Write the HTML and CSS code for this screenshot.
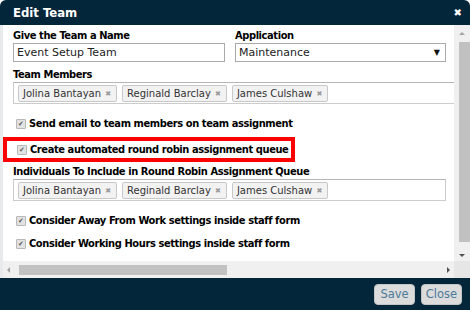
FILE: index.html
```html
<!DOCTYPE html>
<html lang="en">
<head>
  <meta charset="UTF-8" />
  <title>Edit Team</title>
  <link rel="stylesheet" href="styles.css">
</head>
<body>
  <div class="dialog">
    <div class="dlg-head">
      <span class="dlg-title">Edit Team</span>
      <span class="dlg-close">&#x2716;</span>
    </div>

    <div class="scroll-area">
      <div class="content">
        <div class="row">
          <div class="field">
            <label>Give the Team a Name</label>
            <div class="input">Event Setup Team</div>
          </div>
          <div class="field wide">
            <label>Application</label>
            <div class="input select">Maintenance<span class="caret">&#9660;</span></div>
          </div>
        </div>

        <label>Team Members</label>
        <div class="tagbox full">
          <span class="tag">Jolina Bantayan <b>&#x2716;</b></span>
          <span class="tag">Reginald Barclay <b>&#x2716;</b></span>
          <span class="tag">James Culshaw <b>&#x2716;</b></span>
        </div>

        <div class="check first"><span class="box">&#10004;</span>Send email to team members on team assignment</div>
        <div class="highlight">
          <div class="check"><span class="box">&#10004;</span>Create automated round robin assignment queue</div>
        </div>

        <label>Individuals To Include in Round Robin Assignment Queue</label>
        <div class="tagbox">
          <span class="tag">Jolina Bantayan <b>&#x2716;</b></span>
          <span class="tag">Reginald Barclay <b>&#x2716;</b></span>
          <span class="tag">James Culshaw <b>&#x2716;</b></span>
        </div>

        <div class="check first"><span class="box">&#10004;</span>Consider Away From Work settings inside staff form</div>
        <div class="check"><span class="box">&#10004;</span>Consider Working Hours settings inside staff form</div>
      </div>

      <div class="vscroll">
        <span class="arrow up"></span>
        <span class="thumb"></span>
        <span class="arrow down"></span>
      </div>

      <div class="hscroll">
        <span class="arrow left"></span>
        <span class="thumb"></span>
        <span class="arrow right"></span>
      </div>
      <div class="corner"></div>
    </div>

    <div class="dlg-foot">
      <button>Save</button>
      <button>Close</button>
    </div>
  </div>
</body>
</html>
```

FILE: styles.css
```css
body {
  margin: 0;
  font-family: "DejaVu Sans", Verdana, sans-serif;
  font-size: 11px;
  color: #111;
  background: #fff;
}
.dialog {
  width: 470px;
  height: 310px;
  display: flex;
  flex-direction: column;
  overflow: hidden;
}
.dlg-head {
  height: 25px;
  flex: none;
  background: #03263a;
  border-radius: 6px 6px 0 0;
  display: flex;
  align-items: center;
  justify-content: space-between;
  padding: 0 8px 0 13px;
  color: #fff;
}
.dlg-title {
  font-family: "DejaVu Sans Condensed", "DejaVu Sans", sans-serif;
  font-weight: bold;
  font-size: 13px;
}
.dlg-close {
  font-size: 10px;
  font-weight: bold;
}
.scroll-area {
  flex: 1;
  display: grid;
  grid-template-columns: 1fr 16px;
  grid-template-rows: 1fr 17px;
  background: #fff;
  border-left: 3px solid #e8ebee;
  min-height: 0;
}
.content {
  padding: 4px 0 0 10px;
  overflow: hidden;
  min-width: 0;
}
label, .check {
  font-family: "DejaVu Sans Condensed", "DejaVu Sans", sans-serif;
  font-weight: bold;
  letter-spacing: -0.4px;
  color: #000;
}
label {
  display: block;
  line-height: 13px;
  margin-bottom: 1px;
  white-space: nowrap;
}
.row {
  display: flex;
  gap: 10px;
  margin-bottom: 6px;
}
.field {
  width: 212px;
  flex: none;
}
.field.wide {
  width: 211px;
}
.input {
  height: 17px;
  border: 1px solid #aaa;
  line-height: 17px;
  padding: 0 3px;
  color: #222;
}
.select {
  position: relative;
}
.caret {
  position: absolute;
  right: 5px;
  top: 0;
  font-size: 8px;
  color: #111;
}
.tagbox {
  width: 423px;
  height: 20px;
  border: 1px solid #ccc;
  border-top-color: #b5b5b5;
  padding: 0 4px;
  display: flex;
  align-items: center;
  gap: 5px;
  flex: none;
}
.tagbox.full {
  width: 460px;
}
.tag {
  height: 15px;
  border: 1px solid #c8c8c8;
  border-radius: 2px;
  background: #f2f2f2;
  padding: 0 5px 0 4px;
  font-size: 10px;
  line-height: 15px;
  color: #333;
  white-space: nowrap;
}
.tag b {
  font-size: 7px;
  color: #999;
  vertical-align: 1px;
  margin-left: 1px;
}
.check {
  display: flex;
  align-items: center;
  height: 23px;
  white-space: nowrap;
}
.check.first {
  margin-top: 8px;
}
.box {
  width: 8px;
  height: 8px;
  border: 1px solid #b8b8b8;
  background: #e2e2e2;
  border-radius: 1px;
  font-size: 7px;
  line-height: 8px;
  text-align: center;
  color: #555;
  margin: 0 3px 0 3px;
  letter-spacing: 0;
}
.highlight {
  margin: 2px 0 3px -10px;
  width: 274px;
  height: 17px;
  border: 4px solid #f00;
  padding-left: 10px;
  display: flex;
  align-items: center;
}
.highlight .check {
  height: 17px;
}
.highlight .box {
  margin-left: 0;
}
.vscroll, .hscroll {
  background: #f0f0f0;
  display: flex;
  align-items: center;
}
.vscroll {
  flex-direction: column;
  padding-top: 3px;
}
.vscroll .thumb {
  flex: 1;
  width: 11px;
  background: #c1c1c1;
  margin: 3px 0 8px 4px;
}
.hscroll .thumb {
  width: 208px;
  height: 10px;
  background: #c1c1c1;
  margin-left: 5px;
}
.corner {
  background: #e6e6e6;
}
.arrow {
  width: 0;
  height: 0;
  border: 3px solid transparent;
  margin: 4px;
}
.arrow.up { border-bottom-color: #a3a3a3; border-top-width: 0; }
.arrow.down { border-top-color: #505050; border-bottom-width: 0; }
.arrow.left { border-right-color: #a3a3a3; border-left-width: 0; }
.arrow.right { border-left-color: #505050; border-right-width: 0; margin-left: auto; }
.dlg-foot {
  height: 32px;
  flex: none;
  background: #03263a;
  display: flex;
  justify-content: flex-end;
  align-items: center;
  gap: 6px;
  padding-right: 8px;
}
button {
  font-family: "DejaVu Sans", Verdana, sans-serif;
  font-size: 11.5px;
  color: #4d7a99;
  background: #dcdcdc;
  border: 1px solid #c4c4c4;
  border-radius: 4px;
  height: 21px;
  width: 41px;
  padding: 0;
}
```
